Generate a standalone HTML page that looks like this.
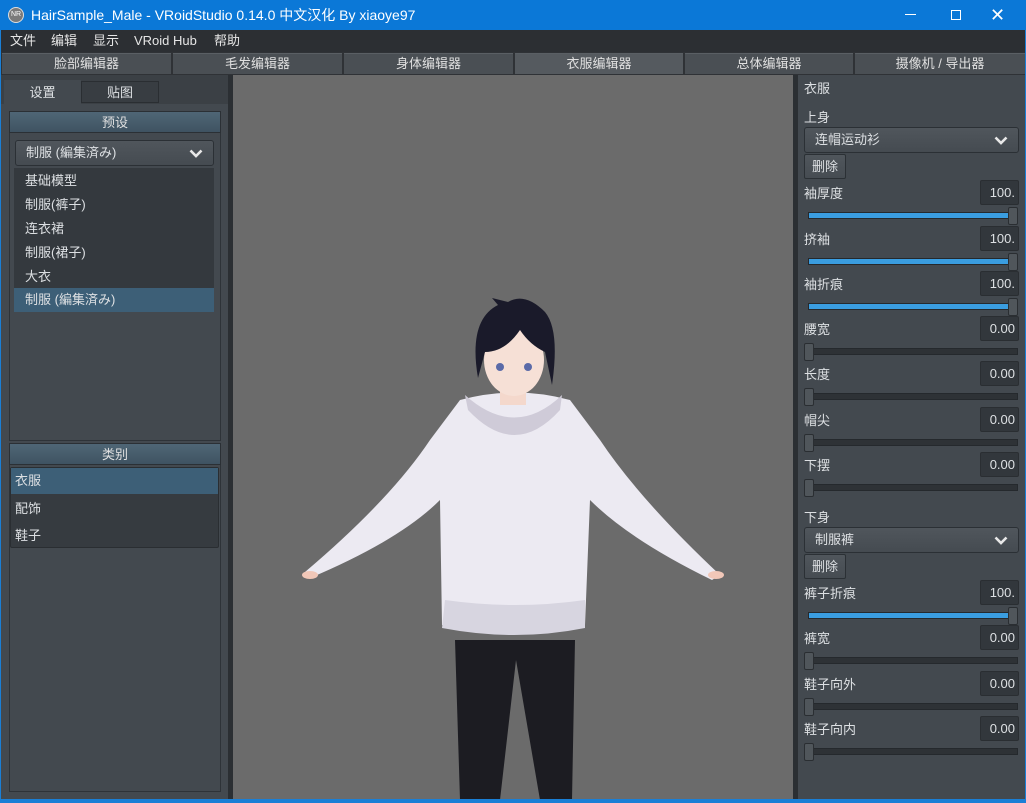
<!DOCTYPE html>
<html><head><meta charset="utf-8"><style>
*{margin:0;padding:0;box-sizing:border-box}
body{width:1026px;height:800px;overflow:hidden;background:#1a7fd6;font-family:"Liberation Sans","Noto Sans CJK SC",sans-serif;font-size:13px;line-height:16px;color:#dde0e3;position:relative}
.abs{position:absolute}
#title{left:0;top:0;width:1026px;height:30px;background:#0b78d7;color:#fff;font-size:14px}
#menu{left:1px;top:30px;width:1024px;height:22px;background:#2c2f33}
#menu span{position:absolute;top:0;line-height:22px;font-size:13px;color:#e6e6e6}
#tabs{left:1px;top:52px;width:1024px;height:23px;background:#2f3236}
.tab{position:absolute;top:1px;height:21px;background:#4a4f54;border-top:1px solid #5a5f64;text-align:center;line-height:20px;color:#e0e0e0}
#left{left:1px;top:75px;width:227px;height:724px;background:#3b4045}
#view{left:233px;top:75px;width:560px;height:724px;background:#6b6b6b}
#sepl{left:228px;top:75px;width:5px;height:724px;background:#2b2f33}
#sepr{left:793px;top:75px;width:5px;height:724px;background:#2b2f33}
#right{left:798px;top:75px;width:227px;height:724px;background:#43494f}
.hdr{position:absolute;height:22px;background:linear-gradient(#4f6676,#3f5362);text-align:center;line-height:21px;color:#e0e0e0;border:1px solid #2b3035}
.combo{position:absolute;height:26px;background:linear-gradient(#50565c,#454b51);border:1px solid #2b3035;border-radius:3px;line-height:24px;padding-left:10px}
.chev{position:absolute;right:10px;top:8px;width:14px;height:9px}
.btn{position:absolute;height:25px;width:42px;background:linear-gradient(#50565c,#464c52);border:1px solid #2b3035;border-radius:2px;text-align:center;line-height:23px}
.lbl{position:absolute;left:6px;line-height:16px}
.val{position:absolute;left:182px;width:39px;height:25px;background:#32373c;border:1px solid #2a2e32;border-radius:2px;text-align:right;padding-right:3px;line-height:23px}
.track{position:absolute;left:10px;width:210px;height:7px;background:#2e3236;border:1px solid #25292d}
.fill{position:absolute;left:0;top:0;height:5px;background:#3a9de0}
.hdl{position:absolute;width:10px;height:18px;background:#50565b;border:1px solid #2a2e32;border-radius:2px}
.item{position:absolute;left:13px;width:200px;height:24px;line-height:24px;padding-left:11px}
</style></head><body>
<div id="title" class="abs">
<div class="abs" style="left:8px;top:7px;width:16px;height:16px;border-radius:50%;background:#7a7a7a;border:1px solid #ddd;font-size:7px;line-height:14px;text-align:center;color:#fff">NR</div>
<div class="abs" style="left:31px;top:6px;line-height:18px">HairSample_Male - VRoidStudio 0.14.0 中文汉化 By xiaoye97</div>
<div class="abs" style="left:905px;top:14px;width:11px;height:1px;background:#fff"></div>
<div class="abs" style="left:951px;top:10px;width:10px;height:10px;border:1px solid #fff"></div>
<div class="abs" style="left:990px;top:4px;font-size:18px;line-height:22px;color:#fff">✕</div>
</div>
<div id="menu" class="abs"><span style="left:9px">文件</span><span style="left:50px">编辑</span><span style="left:92px">显示</span><span style="left:133px">VRoid Hub</span><span style="left:213px">帮助</span></div>
<div id="tabs" class="abs">
<div class="tab" style="left:1px;width:169px">脸部编辑器</div>
<div class="tab" style="left:172px;width:169px">毛发编辑器</div>
<div class="tab" style="left:343px;width:169px">身体编辑器</div>
<div class="tab" style="left:514px;width:168px;background:#555a5f">衣服编辑器</div>
<div class="tab" style="left:684px;width:168px">总体编辑器</div>
<div class="tab" style="left:854px;width:170px">摄像机 / 导出器</div>
</div>
<div id="left" class="abs">
<div class="abs" style="left:3px;top:5px;width:77px;height:24px;background:#43494f;text-align:center;line-height:26px">设置</div>
<div class="abs" style="left:80px;top:6px;width:78px;height:22px;background:#383d42;border:1px solid #2a2e32;text-align:center;line-height:21px">贴图</div>
<div class="abs" style="left:0;top:29px;width:227px;height:695px;background:#43494f"></div>
<div class="abs" style="left:8px;top:36px;width:212px;height:330px;border:1px solid #2e3338"></div>
<div class="hdr" style="left:8px;top:36px;width:212px">预设</div>
<div class="combo" style="left:14px;top:65px;width:199px">制服 (編集済み)<svg class="chev" viewBox="0 0 14 9"><path d="M1.5 1.5L7 7l5.5-5.5" stroke="#e8e8e8" stroke-width="2.6" fill="none"/></svg></div>
<div class="abs" style="left:13px;top:93px;width:200px;height:144px;background:#34393e"></div>
<div class="item" style="top:94px">基础模型</div>
<div class="item" style="top:118px">制服(裤子)</div>
<div class="item" style="top:142px">连衣裙</div>
<div class="item" style="top:166px">制服(裙子)</div>
<div class="item" style="top:190px">大衣</div>
<div class="item" style="top:213px;background:#3d5f77">制服 (編集済み)</div>
<div class="abs" style="left:8px;top:368px;width:212px;height:349px;border:1px solid #2e3338"></div>
<div class="hdr" style="left:8px;top:368px;width:212px">类别</div>
<div class="abs" style="left:9px;top:392px;width:209px;height:81px;background:#363b40;border:1px solid #2a2e32;border-radius:2px"></div>
<div class="abs" style="left:10px;top:393px;width:207px;height:26px;background:#3d5f77;padding-left:4px;line-height:26px">衣服</div>
<div class="abs" style="left:14px;top:421px;line-height:26px">配饰</div>
<div class="abs" style="left:14px;top:448px;line-height:26px">鞋子</div>
</div>
<div id="sepl" class="abs"></div>
<div id="view" class="abs">
<svg width="560" height="724" viewBox="233 75 560 724">
<path d="M455 640 L575 640 L572 800 L540 800 L516 660 L500 800 L460 800 Z" fill="#1c1c22"/>
<path d="M460 400 Q515 385 570 400 L600 440 Q640 500 720 575 L712 580 Q630 540 590 500 L585 625 Q515 640 442 625 L440 500 Q400 540 310 578 L305 572 Q390 500 430 440 Z" fill="#eceaf2"/>
<path d="M445 600 Q515 610 585 600 L585 628 Q515 642 442 628 Z" fill="#d7d5e0"/>
<path d="M465 395 Q515 440 562 395 L560 410 Q515 460 468 410Z" fill="#cfcbd8"/>
<rect x="500" y="375" width="26" height="30" fill="#f4d8cc"/>
<ellipse cx="514" cy="360" rx="30" ry="36" fill="#f6e0d6"/>
<path d="M478 378 Q468 320 498 305 L492 298 L508 302 Q525 292 545 312 Q560 330 552 385 L545 352 Q530 345 520 330 Q505 352 485 352 Z" fill="#1a1a2a"/>
<circle cx="500" cy="367" r="4" fill="#5a6aa8"/><circle cx="528" cy="367" r="4" fill="#5a6aa8"/>
<ellipse cx="310" cy="575" rx="8" ry="4" fill="#f1c7b8"/><ellipse cx="716" cy="575" rx="8" ry="4" fill="#f1c7b8"/>
</svg>
</div>
<div id="sepr" class="abs"></div>
<div id="right" class="abs">
<div class="lbl" style="top:6px">衣服</div>
<div class="lbl" style="top:35px">上身</div>
<div class="combo" style="left:6px;top:52px;width:215px">连帽运动衫<svg class="chev" viewBox="0 0 14 9"><path d="M1.5 1.5L7 7l5.5-5.5" stroke="#e8e8e8" stroke-width="2.6" fill="none"/></svg></div>
<div class="btn" style="left:6px;top:79px">删除</div>
<div class="lbl" style="top:111px">袖厚度</div><div class="val" style="top:105px">100.</div><div class="track" style="top:137px"><div class="fill" style="width:202px"></div></div><div class="hdl" style="left:210px;top:132px"></div>
<div class="lbl" style="top:157px">挤袖</div><div class="val" style="top:151px">100.</div><div class="track" style="top:183px"><div class="fill" style="width:202px"></div></div><div class="hdl" style="left:210px;top:178px"></div>
<div class="lbl" style="top:202px">袖折痕</div><div class="val" style="top:196px">100.</div><div class="track" style="top:228px"><div class="fill" style="width:202px"></div></div><div class="hdl" style="left:210px;top:223px"></div>
<div class="lbl" style="top:247px">腰宽</div><div class="val" style="top:241px">0.00</div><div class="track" style="top:273px"></div><div class="hdl" style="left:6px;top:268px"></div>
<div class="lbl" style="top:292px">长度</div><div class="val" style="top:286px">0.00</div><div class="track" style="top:318px"></div><div class="hdl" style="left:6px;top:313px"></div>
<div class="lbl" style="top:338px">帽尖</div><div class="val" style="top:332px">0.00</div><div class="track" style="top:364px"></div><div class="hdl" style="left:6px;top:359px"></div>
<div class="lbl" style="top:383px">下摆</div><div class="val" style="top:377px">0.00</div><div class="track" style="top:409px"></div><div class="hdl" style="left:6px;top:404px"></div>
<div class="lbl" style="top:435px">下身</div>
<div class="combo" style="left:6px;top:452px;width:215px">制服裤<svg class="chev" viewBox="0 0 14 9"><path d="M1.5 1.5L7 7l5.5-5.5" stroke="#e8e8e8" stroke-width="2.6" fill="none"/></svg></div>
<div class="btn" style="left:6px;top:479px">删除</div>
<div class="lbl" style="top:511px">裤子折痕</div><div class="val" style="top:505px">100.</div><div class="track" style="top:537px"><div class="fill" style="width:202px"></div></div><div class="hdl" style="left:210px;top:532px"></div>
<div class="lbl" style="top:556px">裤宽</div><div class="val" style="top:550px">0.00</div><div class="track" style="top:582px"></div><div class="hdl" style="left:6px;top:577px"></div>
<div class="lbl" style="top:602px">鞋子向外</div><div class="val" style="top:596px">0.00</div><div class="track" style="top:628px"></div><div class="hdl" style="left:6px;top:623px"></div>
<div class="lbl" style="top:647px">鞋子向内</div><div class="val" style="top:641px">0.00</div><div class="track" style="top:673px"></div><div class="hdl" style="left:6px;top:668px"></div>
</div>
</body></html>
